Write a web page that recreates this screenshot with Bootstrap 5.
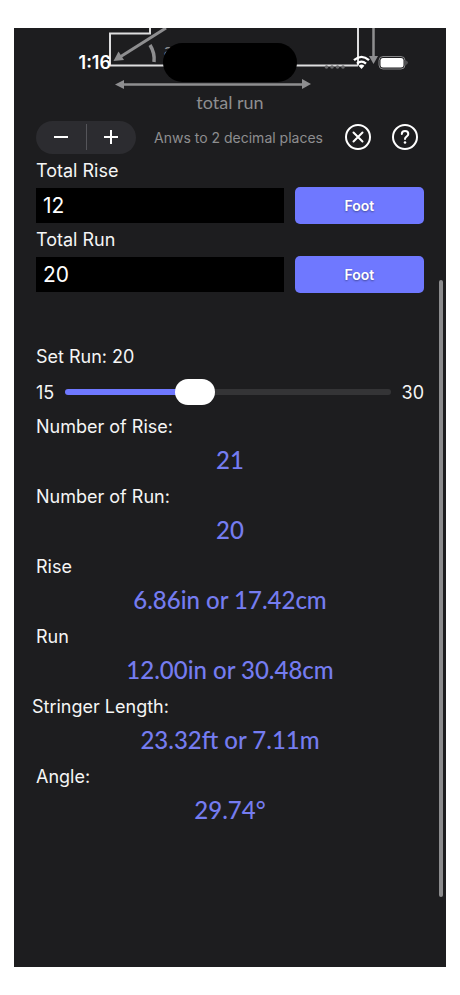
<!DOCTYPE html>
<html lang="en">
<head>
<meta charset="utf-8">
<meta name="viewport" content="width=device-width, initial-scale=1">
<title>Stair Calculator</title>
<link href="https://cdn.jsdelivr.net/npm/bootstrap@5.3.0/dist/css/bootstrap.min.css" rel="stylesheet">
<style>
  :root { --accent: #6f78ff; --screen: #1d1d1f; --muted: #8e8e90; }
  body { background: #fff; font-family: Inter, "Liberation Sans", sans-serif; }
  .screen { min-height: calc(100vh - 56px); margin: 28px 14px; background: var(--screen); color: #f5f5f5; }
  .diagram { line-height: 21px; padding-bottom: 6px; color: var(--muted); font-family: Lato, sans-serif; font-size: 18px; }
  .diagram svg { display: block; width: 100%; }
  .status { top: 15px; height: 39px; grid-template-columns: 1fr 134px 1fr; }
  .clock { font-size: 18px; font-weight: 600; color: #fff; padding-right: 52px; }
  .island { height: 39px; background: #000; }
  .signals { padding-left: 26px; }
  .content { padding: 0 22px 0 18px; }
  .indent { padding-left: 4px; }
  .tools { height: 36px; }
  .stepper { width: 100px; height: 33px; background: #2c2c30; }
  .stepper .btn { color: #fff; }
  .divider { width: 1px; height: 26px; background: #55555a; }
  .hint { font-size: 14px; color: var(--muted); padding-right: 4px; }
  .round-tools { gap: 21px; padding-right: 6px; }
  .round-tools svg { display: block; }
  .caption { font-size: 18px; line-height: 32px; height: 32px; }
  .fields { height: 37px; gap: 11px; }
  .entry { height: 35px; background: #000; color: #fff; font-size: 21px; padding: 0 7px; }
  .entry:focus { background: #000; color: #fff; box-shadow: none; }
  .unit { width: calc(100% / 3); height: 37px; background: var(--accent); color: #fff; font-size: 14px; font-weight: 600; border-radius: 5px; text-shadow: 0 1px 2px #0006; }
  .gap-block { height: 48px; }
  .slide-row { height: 38px; gap: 11px; font-size: 18px; }
  .slider { appearance: none; -webkit-appearance: none; height: 26px; background: transparent; }
  .slider::-webkit-slider-runnable-track { height: 6px; border-radius: 3px; background: linear-gradient(90deg, var(--accent) 40%, #343436 40%); }
  .slider::-webkit-slider-thumb { -webkit-appearance: none; width: 40px; height: 26px; margin-top: -10px; border-radius: 13px; background: #fff; }
  .result { height: 38px; line-height: 34px; padding-bottom: 4px; font-family: Lato, sans-serif; font-size: 24px; font-weight: 500; color: #757cf0; }
  .scrollbar-line { top: 252px; bottom: 70px; right: 3px; width: 4px; background: #8c8c8e; }
</style>
<script src="https://cdn.jsdelivr.net/npm/bootstrap@5.3.0/dist/js/bootstrap.bundle.min.js"></script>
</head>
<body>
<main class="screen position-relative">
  <div class="diagram text-center">
    <svg viewBox="0 0 432 64" fill="none" aria-hidden="true">
      <g stroke="#dededf" stroke-width="2">
        <path d="M96 37.500V5.500H136V0M96 37.500H344M344 37.500V0"/>
      </g>
      <g stroke="#8e8e90" stroke-width="2">
        <path d="M152 0L106 29" stroke-width="3"/>
        <path d="M108 56.500H290M359.500 0V29" stroke-width="2.500"/>
        <path d="M136 17Q141 25 140 34" stroke-width="3.500"/>
      </g>
      <g fill="#8e8e90">
        <path d="M99.500 33L104.500 23.500L110 32Z"/>
        <path d="M101 56.500L110 52V61Z"/>
        <path d="M297 56L288 51V61Z"/>
        <path d="M355 28H364L359.500 36Z"/>
        <text x="150" y="28" font-size="17">angle</text>
      </g>
    </svg>
    total run
  </div>
  <div class="status position-absolute start-0 end-0 d-grid align-items-center">
    <div class="clock text-end">1:16</div>
    <div class="island rounded-pill"></div>
    <div class="signals">
      <svg class="d-block" width="88" height="18" viewBox="0 0 88 18" role="img" aria-label="Wi-Fi on, battery full">
        <g fill="#68686a"><circle cx="3.500" cy="13" r="1.800"/><circle cx="9" cy="13" r="1.800"/><circle cx="14.500" cy="13" r="1.800"/><circle cx="20" cy="13" r="1.800"/></g>
        <g fill="none" stroke="#fff" stroke-width="2.300"><path d="M31 6.200Q38.500 -0.500 46 6.200"/><path d="M34 9.700Q38.500 5.600 43 9.700"/></g>
        <path fill="#fff" d="M35.600 11.800Q38.500 9.300 41.400 11.800L38.500 15Z"/>
        <rect x="56" y="2.500" width="26" height="12.500" rx="4" fill="none" stroke="#858587"/>
        <rect x="57.500" y="4" width="23" height="9.500" rx="2.500" fill="#fff"/>
        <path fill="#858587" d="M83.500 6.500Q85.500 8.700 83.500 11Z"/>
      </svg>
    </div>
  </div>

  <div class="content">
    <div class="tools indent d-flex align-items-center">
      <div class="stepper rounded-pill d-flex align-items-center flex-shrink-0">
        <button type="button" class="btn border-0 p-0 col d-flex justify-content-center" aria-label="Fewer decimal places">
          <svg width="16" height="16" viewBox="0 0 16 16" stroke="currentColor" stroke-width="2"><path d="M1 8H15"/></svg>
        </button>
        <span class="divider"></span>
        <button type="button" class="btn border-0 p-0 col d-flex justify-content-center" aria-label="More decimal places">
          <svg width="16" height="16" viewBox="0 0 16 16" stroke="currentColor" stroke-width="2"><path d="M1 8H15M8 1V15"/></svg>
        </button>
      </div>
      <div class="hint flex-grow-1 text-center text-nowrap">Anws to 2 decimal places</div>
      <div class="round-tools d-flex">
        <button type="button" class="btn border-0 p-0" aria-label="Clear">
          <svg width="26" height="26" viewBox="0 0 26 26" fill="none" stroke="#fff" stroke-width="2" stroke-linecap="round"><circle cx="13" cy="13" r="12"/><path d="M8.500 8.500L17.500 17.500M17.500 8.500L8.500 17.500"/></svg>
        </button>
        <button type="button" class="btn border-0 p-0" aria-label="Help">
          <svg width="26" height="26" viewBox="0 0 26 26" fill="none" stroke="#fff" stroke-width="2" stroke-linecap="round"><circle cx="13" cy="13" r="12"/><path d="M9.800 10C9.800 6 16.300 6 16.300 10C16.300 12.500 13 12.500 13 15"/><circle cx="13" cy="18.500" r="1.300" fill="#fff" stroke="none"/></svg>
        </button>
      </div>
    </div>

    <label class="caption indent d-block" for="rise">Total Rise</label>
    <div class="fields indent d-flex align-items-center">
      <input id="rise" class="entry form-control border-0 rounded-0" type="text" inputmode="decimal" value="12">
      <button type="button" class="unit btn border-0 p-0 flex-shrink-0">Foot</button>
    </div>
    <label class="caption indent d-block" for="run">Total Run</label>
    <div class="fields indent d-flex align-items-center">
      <input id="run" class="entry form-control border-0 rounded-0" type="text" inputmode="decimal" value="20">
      <button type="button" class="unit btn border-0 p-0 flex-shrink-0">Foot</button>
    </div>
    <div class="gap-block"></div>

    <label class="caption indent d-block" for="setrun">Set Run: 20</label>
    <div class="slide-row indent d-flex align-items-center">
      <span>15</span>
      <input id="setrun" class="slider flex-grow-1 w-100" type="range" min="15" max="30" step="0.25" value="20.75">
      <span>30</span>
    </div>

    <div class="caption indent">Number of Rise:</div>
    <div class="result indent text-center">21</div>
    <div class="caption indent">Number of Run:</div>
    <div class="result indent text-center">20</div>
    <div class="caption indent">Rise</div>
    <div class="result indent text-center">6.86in or 17.42cm</div>
    <div class="caption indent">Run</div>
    <div class="result indent text-center">12.00in or 30.48cm</div>
    <div class="caption">Stringer Length:</div>
    <div class="result indent text-center">23.32ft or 7.11m</div>
    <div class="caption indent">Angle:</div>
    <div class="result indent text-center">29.74°</div>
  </div>
  <div class="scrollbar-line position-absolute rounded-pill"></div>
</main>
</body>
</html>
